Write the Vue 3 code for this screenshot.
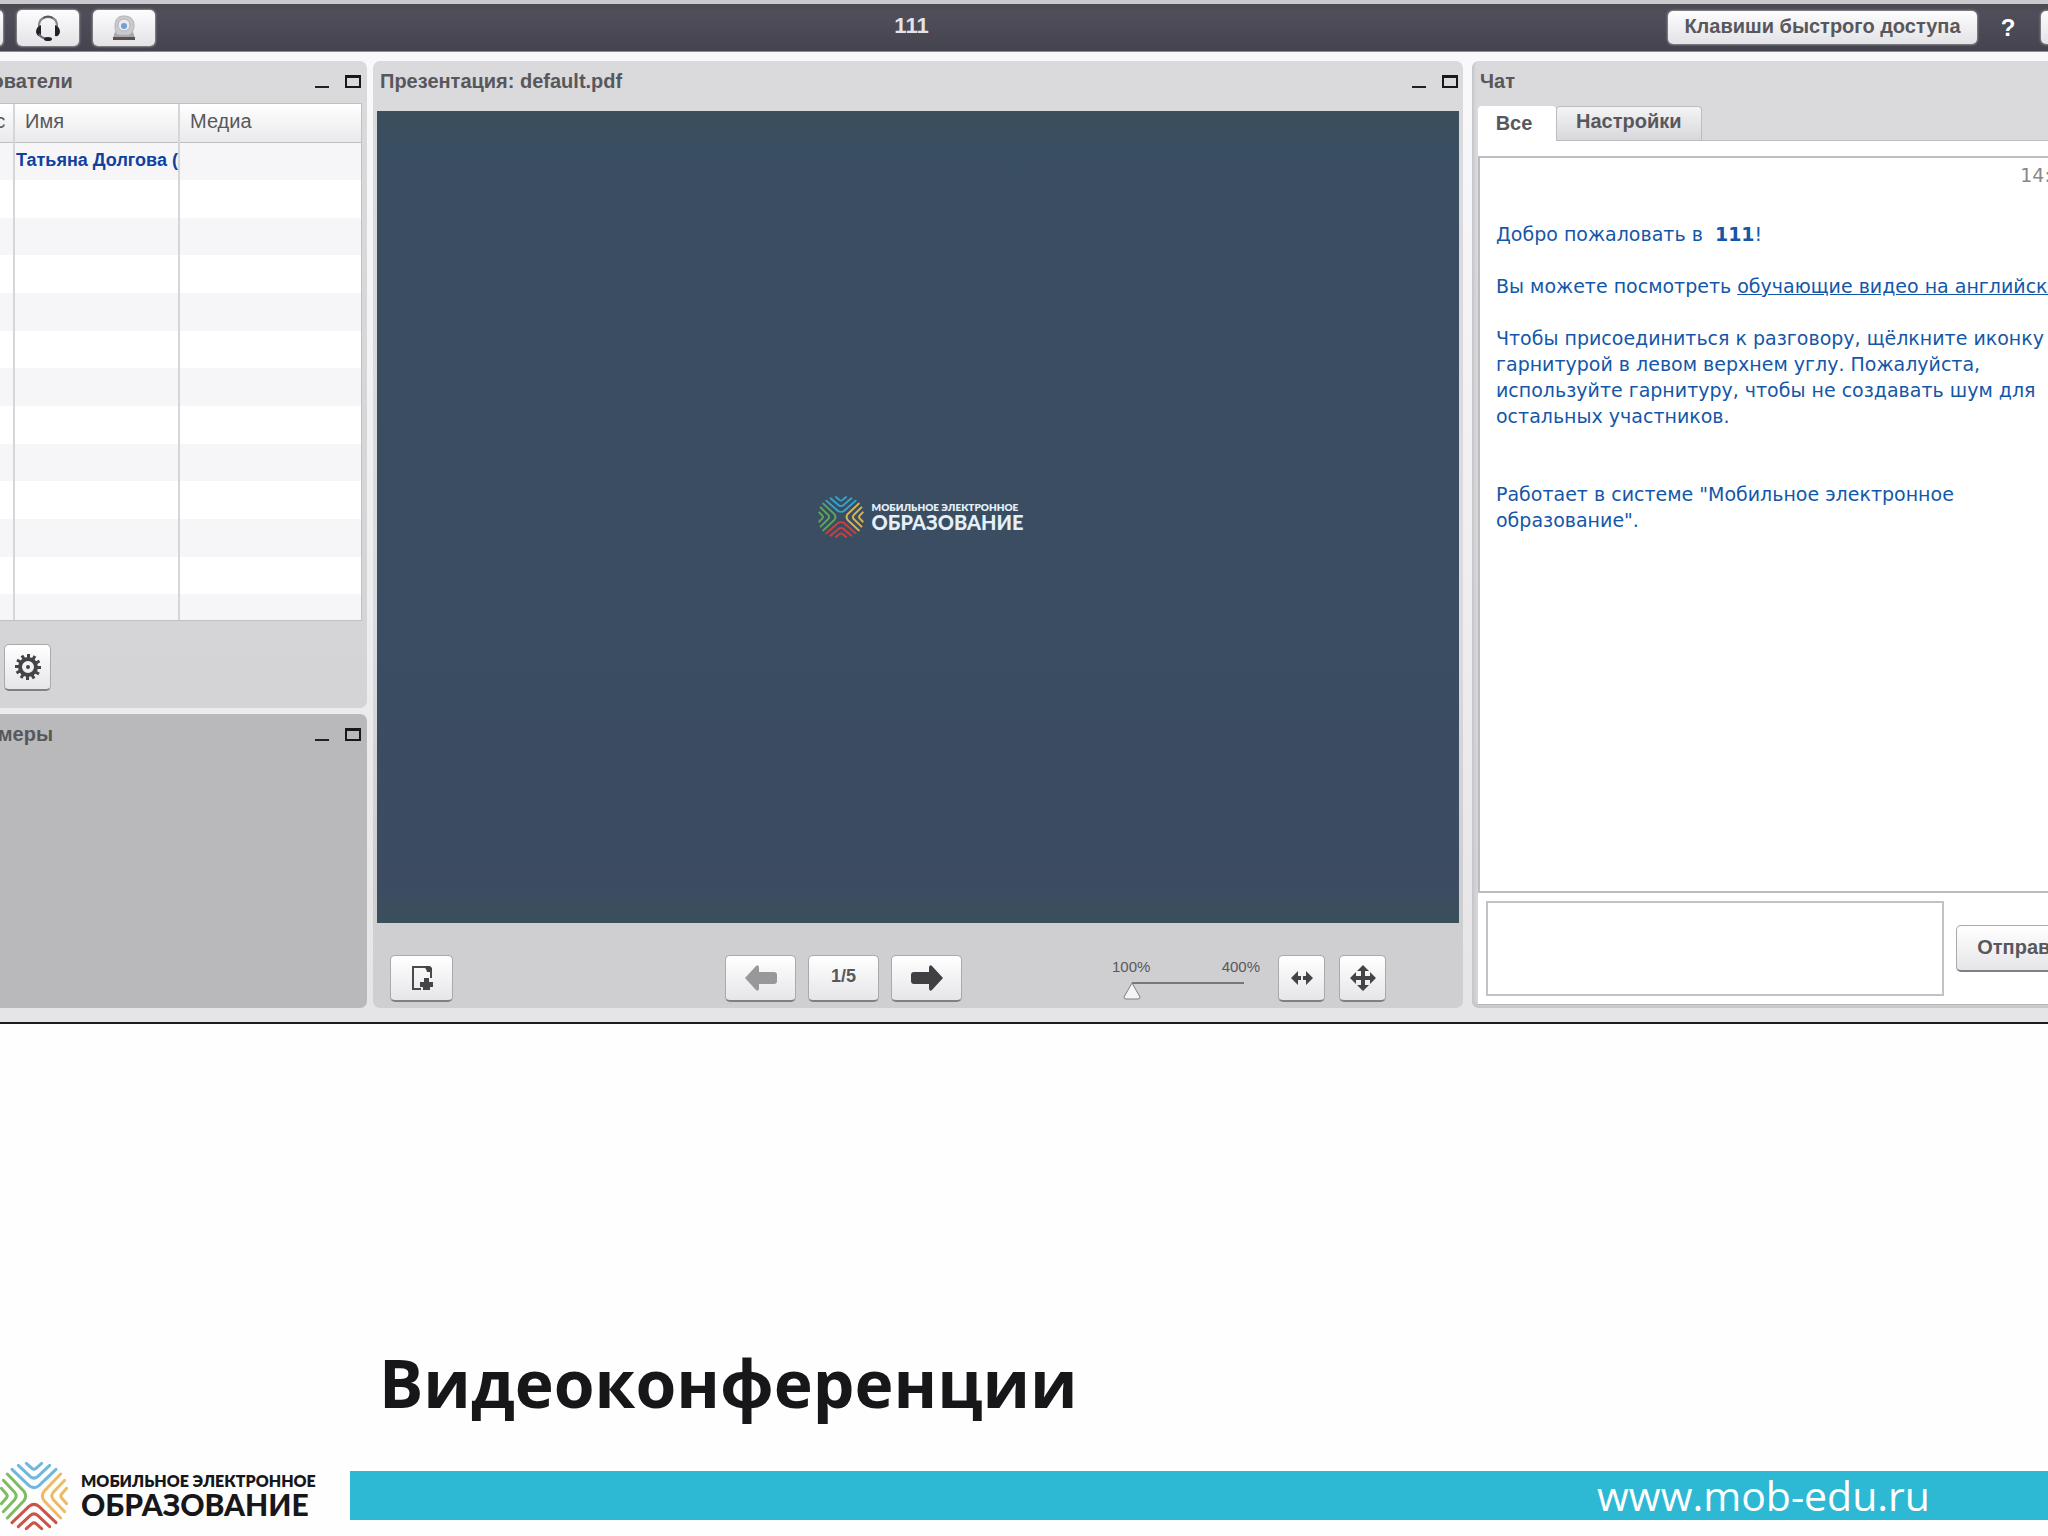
<template>
  <div class="page">
    <div class="viewport">
      <div class="shell">
        <header class="topbar">
          <div class="tools">
            <button class="tool" type="button" aria-label="Экран"></button>
            <button class="tool" type="button" aria-label="Гарнитура">
              <svg width="28" height="28" viewBox="0 0 28 28" fill="none">
                <path d="M5 15V11C5 6 9 3 14 3s9 3 9 8v4" stroke="#85858a" stroke-width="2"/>
                <path d="M9 4Q14 1 19 4" stroke="#55555a" stroke-width="2"/>
                <path d="M2 18q0-5 5-7v11q-4 1-5-4zM26 18q0-5-5-7v11q4 1 5-4z" fill="#222226"/>
                <path d="M5 20q2 4 8 5" stroke="#66666b" stroke-width="2"/>
                <ellipse cx="14" cy="25" rx="4" ry="2" fill="#222226"/>
              </svg>
            </button>
            <button class="tool" type="button" aria-label="Камера">
              <svg width="28" height="28" viewBox="0 0 28 28">
                <path d="M5 18h18l2 6H3z" fill="#a5a5aa"/>
                <path d="M3 23h22v3H3z" fill="#5d4f4f"/>
                <path d="M5 12C5 5 8 2 14 2s10 3 10 9-3 10-6 10H9q-4 0-4-9z" fill="#c9c9cd" stroke="#b4b4b8"/>
                <circle cx="14" cy="11" r="6" fill="#e9e9ee" stroke="#b4b4ba"/>
                <circle cx="14" cy="12" r="3" fill="#6f9fd8"/>
              </svg>
            </button>
          </div>
          <h1 class="room">111</h1>
          <button class="shortcuts" type="button">Клавиши быстрого доступа</button>
          <button class="help" type="button">?</button>
          <button class="logout" type="button" aria-label="Выход"></button>
        </header>

        <main class="workspace">
          <div class="side">
            <section class="panel users">
              <div class="panel_head">
                <h2>Пользователи</h2>
                <button class="win min" type="button" aria-label="Свернуть"></button>
                <button class="win max" type="button" aria-label="Развернуть"></button>
              </div>
              <div class="table_box">
                <table>
                  <thead>
                    <tr><th class="c_status">Статус</th><th class="c_name">Имя</th><th>Медиа</th></tr>
                  </thead>
                  <tbody>
                    <tr v-for="(row, i) in rows" :key="i">
                      <td></td><td class="user">{{ row }}</td><td></td>
                    </tr>
                  </tbody>
                </table>
              </div>
              <button class="btn gear" type="button" aria-label="Настройки">
                <svg width="28" height="28" viewBox="-14 -14 28 28">
                  <g fill="#444448">
                    <rect v-for="n in 12" :key="n" x="-1" y="-13" width="3" height="5" :transform="`rotate(${n * 30})`"/>
                  </g>
                  <circle r="8" fill="none" stroke="#444448" stroke-width="4"/>
                  <circle r="2" fill="#444448"/>
                </svg>
              </button>
            </section>
            <section class="panel cams">
              <div class="panel_head">
                <h2>Вебкамеры</h2>
                <button class="win min" type="button" aria-label="Свернуть"></button>
                <button class="win max" type="button" aria-label="Развернуть"></button>
              </div>
            </section>
          </div>

          <section class="panel deck">
            <div class="panel_head">
              <h2>Презентация: default.pdf</h2>
              <button class="win min" type="button" aria-label="Свернуть"></button>
              <button class="win max" type="button" aria-label="Развернуть"></button>
            </div>
            <div class="slide">
              <div class="brand small">
                <svg class="mark" viewBox="-108 -108 216 216" preserveAspectRatio="none">
                  <g v-for="q in quarters" :key="q.turn" :stroke="q.dark" :transform="`rotate(${q.turn})`">
                    <path v-for="d in chevrons" :key="d" :d="d"/>
                  </g>
                </svg>
                <div class="brand_text"><span>МОБИЛЬНОЕ ЭЛЕКТРОННОЕ</span><b>ОБРАЗОВАНИЕ</b></div>
              </div>
            </div>
            <div class="deck_bar">
              <button class="btn upload" type="button" aria-label="Загрузить">
                <svg width="28" height="28" viewBox="0 0 28 28">
                  <path d="M13 25H5V3h12l6 4v7" fill="none" stroke="#4a4a4e" stroke-width="2"/>
                  <path d="M17 2h5l2 2v4h-5zM16 14h5v4h4v5h-3v3h-7v-3h-3v-5h4z" fill="#444448"/>
                </svg>
              </button>
              <div class="pager">
                <button class="btn wide" type="button" aria-label="Назад">
                  <svg width="32" height="28" viewBox="0 0 32 28"><path d="M0 14L11 2q3-2 3 2v4h15q3 0 3 3v6q0 3-3 3H14v4q0 4-3 2z" fill="#98989b"/></svg>
                </button>
                <button class="btn wide count" type="button">1/5</button>
                <button class="btn wide" type="button" aria-label="Вперёд">
                  <svg width="32" height="28" viewBox="0 0 32 28"><path d="M32 14L21 2q-3-2-3 2v4H3q-3 0-3 3v6q0 3 3 3h15v4q0 4 3 2z" fill="#404044"/></svg>
                </button>
              </div>
              <div class="zoom">
                <label for="zoom"><span>100%</span><span>400%</span></label>
                <input id="zoom" type="range" min="100" max="400" value="100">
              </div>
              <div class="fits">
                <button class="btn fit" type="button" aria-label="По ширине">
                  <svg width="26" height="26" viewBox="0 0 26 26"><path d="M2 13l7-7v5h8V6l7 7-7 7v-5H9v5z" fill="#444448"/><path d="M12 10h2v6h-2z" fill="#eeeef0"/></svg>
                </button>
                <button class="btn fit" type="button" aria-label="По странице">
                  <svg width="26" height="26" viewBox="0 0 26 26"><path d="M13 0l6 6h-4v5h5V7l6 6-6 6v-4h-5v5h4l-6 6-6-6h4v-5H6v4l-6-6 6-6v4h5V6H7z" fill="#444448"/></svg>
                </button>
              </div>
            </div>
          </section>

          <section class="panel chat">
            <h2 class="chat_title">Чат</h2>
            <div class="tabs">
              <button class="tab active" type="button">Все</button>
              <button class="tab" type="button">Настройки</button>
            </div>
            <div class="chat_body">
              <div class="messages">
                <time>14:25</time>
                <p>Добро пожаловать в &nbsp;<b>111</b>!</p>
                <p>Вы можете посмотреть <a href="#">обучающие видео на английском</a></p>
                <p>Чтобы присоединиться к разговору, щёлкните иконку с<br>гарнитурой в левом верхнем углу. Пожалуйста,<br>используйте гарнитуру, чтобы не создавать шум для<br>остальных участников.</p>
                <p class="last">Работает в системе "Мобильное электронное<br>образование".</p>
              </div>
              <form class="compose" @submit.prevent>
                <textarea v-model="draft" aria-label="Сообщение"></textarea>
                <button class="btn send" type="submit">Отправить</button>
              </form>
            </div>
          </section>
        </main>
      </div>
    </div>

    <h2 class="caption">Видеоконференции</h2>

    <footer class="footer">
      <div class="brand">
        <svg class="mark" viewBox="-108 -108 216 216">
          <g v-for="q in quarters" :key="q.turn" :stroke="q.color" :transform="`rotate(${q.turn})`">
            <path v-for="d in chevrons" :key="d" :d="d"/>
          </g>
        </svg>
        <div class="brand_text"><span>МОБИЛЬНОЕ ЭЛЕКТРОННОЕ</span><b>ОБРАЗОВАНИЕ</b></div>
      </div>
      <div class="site"><a href="#">www.mob-edu.ru</a></div>
    </footer>
  </div>
</template>

<script setup>
import { ref } from "vue";

const draft = ref("");
//одна строка занята, остальные пустые
const rows = ["Татьяна Долгова (Вы)", ...Array(12).fill("")];

const chevrons = [
  "M-66-80L-15-31Q0-19 15-31L66-80",
  "M-47-92L-11-58Q0-49 11-58L47-92",
  "M-23-98L-6-83Q0-78 6-83L23-98",
];
const quarters = [
  { turn: 0, color: "#6fb7dc", dark: "#35a3cc" },
  { turn: 90, color: "#ecbb62", dark: "#d9b354" },
  { turn: 180, color: "#ca5449", dark: "#cf3f3d" },
  { turn: 270, color: "#7dbd60", dark: "#5ba55c" },
];
</script>

<style>
  body{
    margin: 0;
    background: #fefefe;
  }
</style>

<style scoped>
  *{
    box-sizing: border-box;
  }
  .page{
    font-family: "Liberation Sans", Arial, sans-serif;
    color: #58585c;
    overflow: hidden;
  }
  h1, h2, p{
    margin: 0;
  }
  button{
    font-family: inherit;
    color: inherit;
    padding: 0;
    border: 0;
    background: none;
  }
  svg{
    display: block;
  }
  .viewport{
    overflow: hidden;
    border-bottom: 2px solid #1c1c20;
  }
  /* окно шире экрана с обеих сторон */
  .shell{
    width: calc(100% + 156px);
    margin-left: -66px;
    padding-bottom: 14px;
    border-top: 4px solid #c9c9ce;
    background: linear-gradient(#fafafc, #f2f2f5 40%, #e5e5e8);
  }
  .topbar{
    height: 48px;
    display: flex;
    align-items: center;
    padding-left: 7px;
    background: linear-gradient(#4a4a50, #504e5a 20%, #45434e);
    border-bottom: 1px solid #8a8a90;
  }
  .tools{
    display: flex;
    gap: 14px;
  }
  .tool, .shortcuts, .logout{
    border-radius: 5px;
    background: linear-gradient(#fdfdfe, #e3e3e7);
    box-shadow: 0 0 2px 1px #8b8b92;
  }
  .tool{
    width: 62px;
    height: 36px;
    display: flex;
    align-items: center;
    justify-content: center;
  }
  .room{
    flex: 1;
    padding-bottom: 4px;
    text-align: center;
    font-size: 22px;
    line-height: 24px;
    color: #e4e4e8;
  }
  .shortcuts{
    width: 309px;
    height: 33px;
    padding-bottom: 2px;
    font-size: 20px;
    font-weight: bold;
  }
  .help{
    width: 62px;
    margin-right: 2px;
    font-size: 24px;
    font-weight: bold;
    color: #fff;
  }
  .logout{
    width: 97px;
    height: 33px;
  }
  .workspace{
    display: grid;
    grid-template-columns: 428px 1fr 660px;
    padding: 9px 6px 0 5px;
  }
  .side{
    display: flex;
    flex-direction: column;
    gap: 6px;
  }
  .panel{
    border-radius: 7px;
    background: linear-gradient(#dadadd, #d4d4d6);
  }
  .panel_head{
    height: 42px;
    display: flex;
    align-items: center;
    padding: 0 6px 2px 0;
  }
  .panel_head h2, .chat_title{
    flex: 1;
    font-size: 20px;
    line-height: 40px;
  }
  .users h2{
    text-indent: -8px;
  }
  .win{
    margin-left: 16px;
    height: 13px;
  }
  .min{
    width: 14px;
    border-bottom: 2px solid #222;
  }
  .max{
    width: 16px;
    border: 2px solid #18181a;
    border-top-width: 3px;
  }
  .users{
    padding-bottom: 17px;
  }
  .table_box{
    height: 518px;
    margin-right: 5px;
    overflow: hidden;
    background: #fff;
    border: 1px solid #c0c0c4;
    border-left: 0;
  }
  table{
    width: 100%;
    table-layout: fixed;
    border-collapse: collapse;
  }
  th{
    height: 38px;
    padding: 0 10px 3px;
    font-size: 20px;
    font-weight: normal;
    text-align: left;
    background: linear-gradient(#fff, #e9e9eb);
    border-bottom: 1px solid #c0c0c4;
  }
  th:first-child{
    padding: 0 3px 3px;
  }
  th + th, td + td{
    border-left: 2px solid #d6d6da;
  }
  .c_status{
    width: 75px;
  }
  .c_name{
    width: 165px;
  }
  td{
    height: 38px;
    padding: 0 1px;
  }
  tbody tr:nth-child(3n) td{
    height: 37px;
  }
  tbody tr:nth-child(odd){
    background: #f6f6f8;
  }
  .user{
    padding-bottom: 2px;
    font-size: 18px;
    line-height: 34px;
    font-weight: bold;
    color: #12409f;
    white-space: nowrap;
    overflow: hidden;
  }
  .btn{
    display: flex;
    align-items: center;
    justify-content: center;
    height: 47px;
    border: 1px solid #aaaaae;
    border-bottom: 2px solid #808084;
    border-radius: 5px;
    background: linear-gradient(#fff, #e6e6e9);
  }
  .gear{
    width: 47px;
    margin: 23px 0 0 65px;
  }
  .cams{
    flex: 1;
    background: #b9b9bb;
  }
  .deck{
    margin: 0 9px 0 6px;
    padding: 0 4px;
    background: linear-gradient(#dadadd, #dadae0 60%, #cfcfd1 85%);
  }
  .deck .panel_head{
    height: 50px;
    padding: 0 1px 10px 0;
  }
  .deck h2{
    padding-left: 3px;
  }
  .slide{
    aspect-ratio: 4 / 3;
    display: flex;
    align-items: center;
    justify-content: center;
    background: linear-gradient(#3b4e5b, #3a4e61 3%, #3a4d62 60%, #3c4b62 95%, #3a505c);
  }
  .brand{
    display: flex;
    align-items: center;
    gap: 11px;
    font-family: Lato, "Open Sans", sans-serif;
    font-weight: 900;
    color: #17171a;
  }
  .mark{
    width: 72px;
    height: 72px;
    fill: none;
    stroke-width: 9;
    stroke-linecap: round;
  }
  .mark path{
    stroke: inherit;
  }
  .brand_text{
    display: flex;
    flex-direction: column;
    white-space: nowrap;
  }
  .brand_text span{
    font-size: 16px;
    line-height: 16px;
    font-weight: 800;
  }
  .brand_text b{
    font-size: 30px;
    line-height: 30px;
  }
  .small{
    gap: 7px;
    margin-right: -4px;
    color: #e4f0f8;
    font-weight: bold;
  }
  .small .mark{
    width: 48px;
    height: 44px;
  }
  .small span{
    font-size: 10px;
    line-height: 10px;
  }
  .small b{
    font-size: 20px;
    line-height: 20px;
  }
  .deck_bar{
    height: 85px;
    display: flex;
    align-items: flex-end;
    padding: 0 73px 6px 13px;
  }
  .upload{
    width: 63px;
  }
  .pager{
    display: flex;
    gap: 12px;
    margin: 0 auto;
    padding-left: 122px;
  }
  .wide{
    width: 71px;
  }
  .count{
    padding-bottom: 3px;
    font-size: 18px;
    font-weight: bold;
  }
  .zoom{
    width: 148px;
    margin-right: 18px;
  }
  .zoom label{
    display: flex;
    justify-content: space-between;
    font-size: 15px;
    line-height: 20px;
  }
  .zoom input{
    appearance: none;
    display: block;
    width: 132px;
    height: 18px;
    margin: 5px 0 2px 10px;
    background: linear-gradient(#77777b, #77777b) no-repeat 10px 0 / 112px 2px;
  }
  .zoom input::-webkit-slider-thumb{
    appearance: none;
    width: 20px;
    height: 18px;
    background: url("data:image/svg+xml,%3Csvg xmlns='http://www.w3.org/2000/svg' width='20' height='18'%3E%3Cpath d='M10 1L18 15Q18 17 16 17H4Q2 17 2 15Z' fill='%23f4f4f6' stroke='%23808084'/%3E%3C/svg%3E") no-repeat;
  }
  .fits{
    display: flex;
    gap: 14px;
  }
  .fit{
    width: 47px;
  }
  .chat{
    display: flex;
    flex-direction: column;
    padding: 0 6px 3px 6px;
    box-shadow: inset 2px -2px 3px #c4c4c8;
  }
  .chat_title{
    flex: none;
    padding: 0 0 5px 2px;
  }
  .tabs{
    display: flex;
  }
  .tab{
    height: 34px;
    padding: 0 19px 6px;
    font-size: 20px;
    line-height: 26px;
    font-weight: bold;
    border: 1px solid #bdbdc1;
    border-bottom: 0;
    border-radius: 4px 4px 0 0;
    background: linear-gradient(#f4f4f6, #d8d8db);
  }
  .tab.active{
    width: 78px;
    height: 35px;
    margin-bottom: -1px;
    padding: 0 6px 3px 0;
    position: relative;
    background: #fff;
    border-color: #fff;
  }
  .chat_body{
    flex: 1;
    display: flex;
    flex-direction: column;
    padding-top: 15px;
    background: #fff;
    border-top: 1px solid #bdbdc1;
    border-bottom: 1px solid #b5b5b9;
  }
  .messages{
    flex: 1;
    padding: 4px 16px;
    border: 2px solid #bdbdc1;
    font-family: "DejaVu Sans", Verdana, sans-serif;
    font-size: 19px;
    line-height: 26px;
    color: #1457a8;
    white-space: nowrap;
  }
  .messages p{
    margin-bottom: 26px;
  }
  .messages .last{
    margin-top: 52px;
  }
  .messages a{
    color: inherit;
  }
  time{
    display: block;
    padding-right: 33px;
    margin-bottom: 33px;
    text-align: right;
    color: #88888c;
  }
  .compose{
    display: flex;
    align-items: center;
    gap: 12px;
    padding: 8px;
  }
  textarea{
    width: 458px;
    height: 95px;
    border: 2px solid #c3c3c7;
    background: #fff;
    resize: none;
    font-size: 19px;
  }
  .send{
    width: 150px;
    font-size: 20px;
    font-weight: bold;
  }
  .caption{
    padding: 308px 0 0 379px;
    font-family: "Open Sans", "Noto Sans", sans-serif;
    font-size: 66px;
    line-height: 100px;
    color: #17171a;
  }
  .footer{
    display: flex;
    align-items: center;
    margin: 28px 0 4px -2px;
  }
  .footer .brand{
    width: 352px;
  }
  .site{
    flex: 1;
    height: 49px;
    padding-right: 118px;
    background: #2db8d4;
    text-align: right;
    font-family: "Open Sans", "Noto Sans", sans-serif;
    font-size: 41px;
    line-height: 48px;
  }
  .site a{
    color: #fff;
    text-decoration: none;
  }
</style>
